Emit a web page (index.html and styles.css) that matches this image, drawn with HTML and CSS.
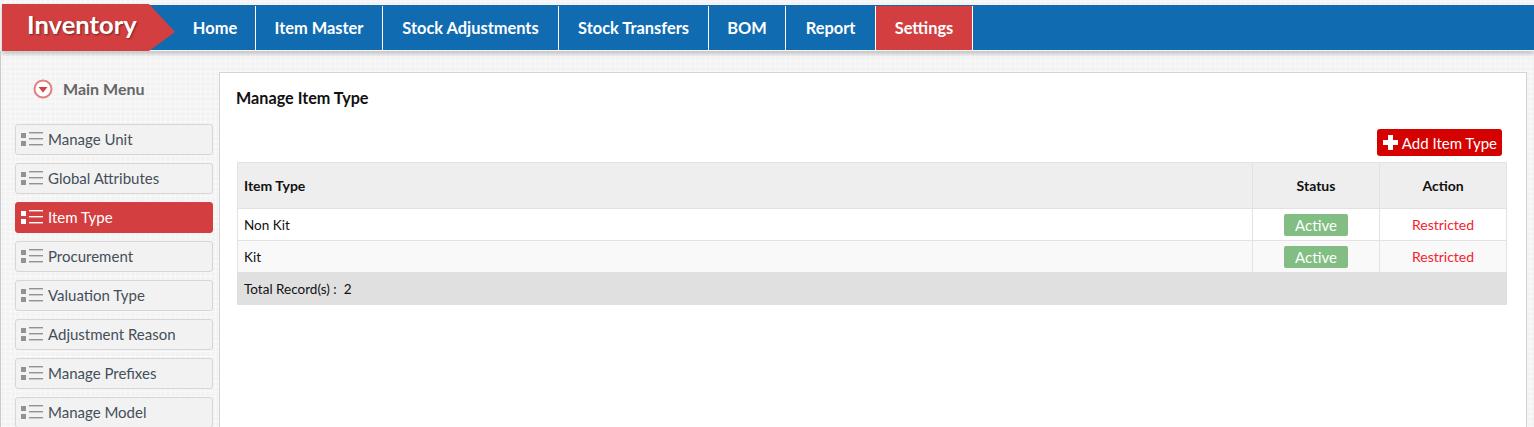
FILE: index.html
```html
<!DOCTYPE html>
<html lang="en">
<head>
  <meta charset="UTF-8" />
  <meta name="viewport" content="width=device-width, initial-scale=1.0" />
  <title>Inventory</title>
  <link rel="stylesheet" href="styles.css">
</head>
<body>

  <header class="topbar">
    <div class="brand">Inventory</div>
    <nav class="topnav">
      <a class="nav-home">Home</a>
      <a class="nav-master">Item Master</a>
      <a class="nav-adjust">Stock Adjustments</a>
      <a class="nav-transfer">Stock Transfers</a>
      <a class="nav-bom">BOM</a>
      <a class="nav-report">Report</a>
      <a class="nav-settings active">Settings</a>
    </nav>
  </header>

  <div class="page">
    <aside class="sidebar">
      <div class="menu-title">
        <svg class="menu-toggle" width="20" height="20" viewBox="0 0 20 20">
          <circle cx="10" cy="10" r="8.5" fill="#fff" stroke="#e47f7f" stroke-width="2" />
          <path d="M5.5 8h9L10 13.5z" fill="#d43f3f" />
        </svg>
        <span>Main Menu</span>
      </div>

      <a class="side-link"><svg class="list-icon" viewBox="0 0 22 16"><use href="#list" /></svg>Manage Unit</a>
      <a class="side-link"><svg class="list-icon" viewBox="0 0 22 16"><use href="#list" /></svg>Global Attributes</a>
      <a class="side-link active"><svg class="list-icon" viewBox="0 0 22 16"><use href="#list" /></svg>Item Type</a>
      <a class="side-link"><svg class="list-icon" viewBox="0 0 22 16"><use href="#list" /></svg>Procurement</a>
      <a class="side-link"><svg class="list-icon" viewBox="0 0 22 16"><use href="#list" /></svg>Valuation Type</a>
      <a class="side-link"><svg class="list-icon" viewBox="0 0 22 16"><use href="#list" /></svg>Adjustment Reason</a>
      <a class="side-link"><svg class="list-icon" viewBox="0 0 22 16"><use href="#list" /></svg>Manage Prefixes</a>
      <a class="side-link"><svg class="list-icon" viewBox="0 0 22 16"><use href="#list" /></svg>Manage Model</a>
    </aside>

    <main class="panel">
      <h2>Manage Item Type</h2>

      <div class="toolbar">
        <button class="add-btn" type="button">
          <svg width="15" height="15" viewBox="0 0 15 15"><path d="M5 0h5v5h5v5h-5v5H5v-5H0V5h5z" fill="#fff" /></svg>
          Add Item Type
        </button>
      </div>

      <table class="grid">
        <thead>
          <tr>
            <th class="col-type">Item Type</th>
            <th class="col-status">Status</th>
            <th class="col-action">Action</th>
          </tr>
        </thead>
        <tbody>
          <tr>
            <td>Non Kit</td>
            <td class="center"><span class="badge">Active</span></td>
            <td class="center restricted">Restricted</td>
          </tr>
          <tr>
            <td>Kit</td>
            <td class="center"><span class="badge">Active</span></td>
            <td class="center restricted">Restricted</td>
          </tr>
        </tbody>
        <tfoot>
          <tr>
            <td colspan="3">Total Record(s) :&nbsp; 2</td>
          </tr>
        </tfoot>
      </table>
    </main>
  </div>

  <svg width="0" height="0" class="defs">
    <defs>
      <g id="list" fill="currentColor">
        <rect x="0" y="2" width="5" height="5" />
        <rect x="0" y="10" width="5" height="5" />
        <rect x="8" y="1" width="14" height="1.4" />
        <rect x="8" y="7" width="14" height="1.4" />
        <rect x="8" y="13" width="14" height="1.4" />
      </g>
    </defs>
  </svg>

</body>
</html>
```

FILE: styles.css
```css
html, body {
  height: 100%;
  overflow: hidden;
}

body {
  margin: 0;
  padding-top: 4px;
  box-sizing: border-box;
  font-family: Lato, 'Open Sans', sans-serif;
  font-size: 14px;
  color: #222;
  background-color: #f3f3f3;
  background-image:
    repeating-linear-gradient(0deg, rgba(255, 255, 255, 0.45) 0 1px, transparent 1px 5px),
    repeating-linear-gradient(90deg, rgba(255, 255, 255, 0.45) 0 1px, transparent 1px 5px);
}

.defs {
  position: absolute;
  height: 0;
}

/* top bar */
.topbar {
  display: flex;
  height: 47px;
  margin-left: 2px;
  box-shadow: 0 3px 4px rgba(0, 0, 0, 0.2);
  background: linear-gradient(#116bb1, #116bb1) 0 1px / 100% 45px no-repeat;
}

.brand {
  position: relative;
  z-index: 1;
  width: 173px;
  padding-left: 25px;
  box-sizing: border-box;
  background: #d33f40;
  clip-path: polygon(0 0, 147px 0, 173px 28px, 147px 100%, 0 100%);
  color: #fff;
  font-size: 25.6px;
  font-weight: 700;
  line-height: 40px;
  text-shadow: 1px 1px 2px rgba(0, 0, 0, 0.45);
}

.topnav {
  display: flex;
  height: 44px;
  margin-top: 2px;
}

.topnav a {
  display: flex;
  align-items: center;
  justify-content: center;
  box-sizing: border-box;
  padding-bottom: 2px;
  border-right: 1px solid #fff;
  color: #fff;
  font-size: 16.4px;
  font-weight: 700;
}

.nav-home { width: 81px; }
.nav-master { width: 127px; }
.nav-adjust { width: 176px; }
.nav-transfer { width: 150px; }
.nav-bom { width: 77px; }
.nav-report { width: 90px; }
.nav-settings { width: 97px; }

.topnav a.active {
  background: #d33f40;
}

/* page body */
.page {
  display: flex;
  height: 376px;
  border-left: 1px solid #ccc;
}

.sidebar {
  width: 198px;
  margin-left: 14px;
  flex-shrink: 0;
  overflow: hidden;
}

.menu-title {
  display: flex;
  align-items: center;
  gap: 10px;
  height: 73px;
  padding: 2px 0 0 18px;
  box-sizing: border-box;
  color: #666;
  font-size: 16px;
  font-weight: 700;
}

.side-link {
  display: flex;
  align-items: center;
  height: 31px;
  margin-bottom: 8px;
  padding: 0 0 2px 5px;
  box-sizing: border-box;
  border: 1px solid #d6d6d6;
  border-radius: 3px;
  background: #f2f2f2;
  color: #444f5a;
  font-size: 15px;
  white-space: nowrap;
}

.list-icon {
  width: 22px;
  height: 16px;
  margin-right: 5px;
  flex-shrink: 0;
  color: #929292;
}

.side-link.active {
  border-color: #d33f40;
  background: #d33f40;
  color: #fff;
}

.side-link.active .list-icon {
  color: #fff;
}

/* main panel */
.panel {
  flex: 1;
  margin: 21px 7px 0 6px;
  padding: 0 18px 0 17px;
  border: 1px solid #d4d4d4;
  border-bottom: 0;
  background: #fff;
}

.panel h2 {
  margin: 16px 0 0 -1px;
  color: #111;
  font-size: 16.2px;
  font-weight: 700;
  line-height: 18px;
}

.toolbar {
  display: flex;
  justify-content: flex-end;
  margin-top: 22px;
  padding-right: 6px;
}

.add-btn {
  display: flex;
  align-items: center;
  gap: 4px;
  height: 27px;
  padding: 0 5px 0 6px;
  border: none;
  border-radius: 3px;
  background: #d50000;
  color: #fff;
  font-family: inherit;
  font-size: 15px;
}

.grid {
  width: 1270px;
  margin-top: 6px;
  border-collapse: collapse;
  table-layout: fixed;
  color: #111;
}

.grid th,
.grid td {
  padding: 0 6px;
  border: 1px solid #e2e2e2;
  font-size: 13.5px;
}

.grid th {
  height: 45px;
  background: #eee;
  font-size: 14px;
  font-weight: 700;
  text-align: center;
}

.grid th.col-type {
  text-align: left;
}

.col-status,
.col-action {
  width: 114px;
}

.grid tbody td {
  height: 31px;
}

.grid tbody tr:nth-child(even) {
  background: #f9f9f9;
}

.grid .center {
  text-align: center;
}

.grid .restricted {
  color: #f5222d;
  font-size: 14px;
}

.badge {
  display: inline-block;
  width: 64px;
  height: 22px;
  border-radius: 2px;
  background: #82bd83;
  color: #fff;
  font-size: 15px;
  line-height: 22px;
  vertical-align: middle;
}

.grid tfoot td {
  height: 31px;
  border-color: #e0e0e0;
  background: #e0e0e0;
  font-size: 13.5px;
}
```
